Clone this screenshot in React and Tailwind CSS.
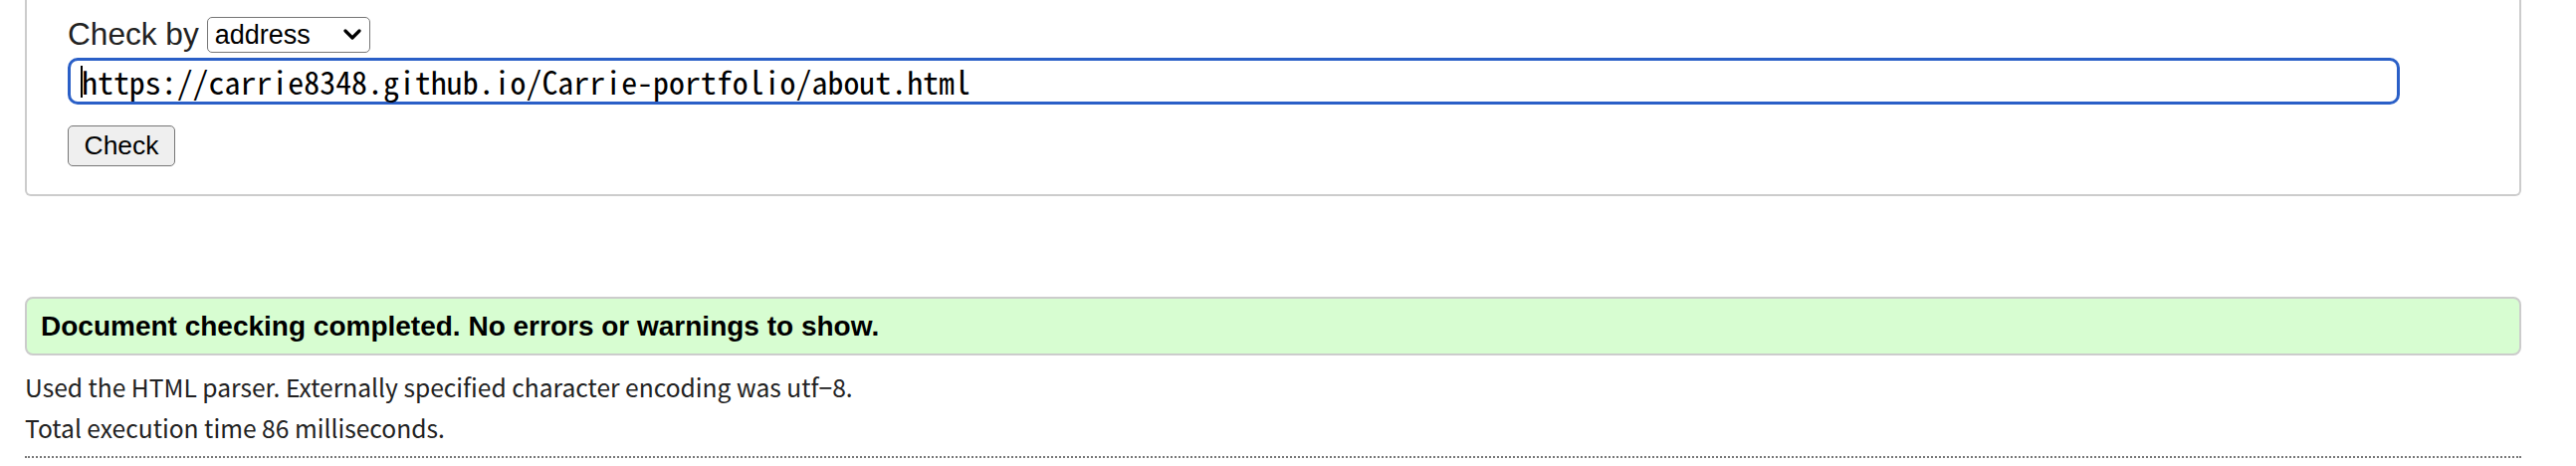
export default function App() {
  return (
    <div className="min-h-screen bg-white pl-[25px] pr-[55px] text-[#222]" style={{ fontFamily: '"Liberation Sans", Arial, sans-serif' }}>
      <div className="rounded-b-[6px] border-x-2 border-b-2 border-[#ccc] pl-[41px] pb-[28px] pt-[17px]">
        <div className="flex h-[36px] items-center">
          <span className="text-[31.6px] leading-none text-[#222]">Check by</span>
          <div className="relative ml-[8px]">
            <select
              defaultValue="address"
              className="h-[36px] w-[164px] appearance-none rounded-[5px] border-[1.5px] border-[#767676] bg-white pl-[7px] text-[27px] leading-none text-black outline-none"
            >
              <option value="address">address</option>
              <option value="file">file upload</option>
              <option value="text">text input</option>
            </select>
            <svg className="pointer-events-none absolute right-[9px] top-[12px]" width="18" height="11" viewBox="0 0 18 11">
              <path d="M2 2 L9 9 L16 2" fill="none" stroke="#000" strokeWidth="3.2" strokeLinecap="round" strokeLinejoin="round" />
            </svg>
          </div>
        </div>

        <div className="mt-[5px] flex h-[47px] w-[2343px] items-center rounded-[10px] border-[3px] border-[#2a5fc7] bg-white pl-[10px]">
          <span className="h-[32px] w-[2px] bg-black" />
          <span
            className="-ml-[1px] text-[31.9px] leading-none text-black"
            style={{ fontFamily: '"Noto Sans Mono CJK JP", "DejaVu Sans Mono", monospace' }}
          >
            https://carrie8348.github.io/Carrie-portfolio/about.html
          </span>
        </div>

        <button className="mt-[21px] flex h-[41px] w-[108px] items-center justify-center rounded-[5px] border-[1.5px] border-[#767676] bg-[#efefef] text-[26.4px] leading-none text-black">
          Check
        </button>
      </div>

      <div className="mt-[101px] flex h-[59px] items-center rounded-[8px] border-2 border-[#ccc] bg-[#d7fdd1] pl-[14px]">
        <span className="text-[28px] font-bold leading-none text-black">
          Document checking completed. No errors or warnings to show.
        </span>
      </div>

      <div style={{ fontFamily: '"Noto Sans CJK JP", "Noto Sans", sans-serif' }} className="mt-[11px] text-[24.6px] text-[#222]">
        <p className="flex h-[41px] items-center">Used the HTML parser. Externally specified character encoding was utf−8.</p>
        <p className="flex h-[41px] items-center">Total execution time 86 milliseconds.</p>
      </div>

      <div className="mt-[8px] border-t-2 border-dotted border-[#777]" />
    </div>
  )
}
